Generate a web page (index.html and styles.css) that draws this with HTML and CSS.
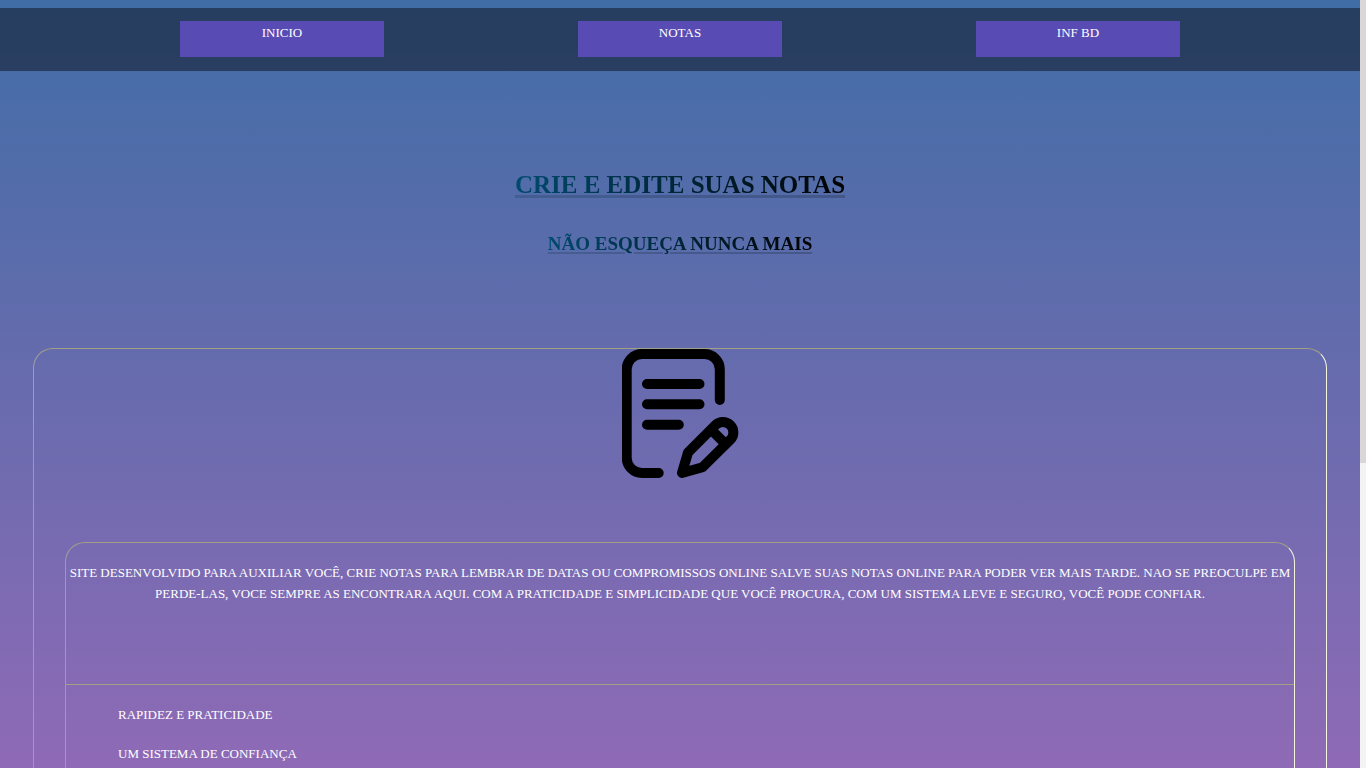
FILE: index.html
```html
<!DOCTYPE html>
<html lang="pt-BR">
<head>
<meta charset="utf-8">
<meta name="viewport" content="width=device-width, initial-scale=1">
<title>Notas</title>
<link rel="stylesheet" href="styles.css">
</head>
<body>
<div class="page">
  <nav class="menu">
    <a class="menu-link" href="#inicio">INICIO</a>
    <a class="menu-link" href="#notas">NOTAS</a>
    <a class="menu-link" href="#infbd">INF BD</a>
  </nav>
  <header class="hero">
    <h1 class="title">CRIE E EDITE SUAS NOTAS</h1>
    <h2 class="subtitle">NÃO ESQUEÇA NUNCA MAIS</h2>
  </header>
  <main class="card">
    <svg class="note-icon" viewBox="22 9 117 129" fill="none" stroke="#000" stroke-width="10" stroke-linecap="round" stroke-linejoin="round" role="img" aria-label="Nota">
      <path d="M58.700 133H42a15.300 15.300 0 0 1-15.300-15.300V29.300A15.300 15.300 0 0 1 42 14h62.500a15.300 15.300 0 0 1 15.300 15.300v30.700"/>
      <path d="M47 44h52.500M47 64.300h52.500M47 84.700h31.800"/>
      <path d="M82 133l6-20.500 27.500-27.500a10.400 10.400 0 0 1 14.800 14.800L102.500 127.300z"/>
      <path d="M113.500 92l11 11" stroke-linecap="butt"/>
    </svg>
    <section class="about">
      <p class="about-text">SITE DESENVOLVIDO PARA AUXILIAR VOCÊ, CRIE NOTAS PARA LEMBRAR DE DATAS OU COMPROMISSOS ONLINE SALVE SUAS NOTAS ONLINE PARA PODER VER MAIS TARDE. NAO SE PREOCULPE EM PERDE-LAS, VOCE SEMPRE AS ENCONTRARA AQUI. COM A PRATICIDADE E SIMPLICIDADE QUE VOCÊ PROCURA, COM UM SISTEMA LEVE E SEGURO, VOCÊ PODE CONFIAR.</p>
      <ul class="features">
        <li>RAPIDEZ E PRATICIDADE</li>
        <li>UM SISTEMA DE CONFIANÇA</li>
      </ul>
    </section>
  </main>
</div>
<div class="scroll-track" aria-hidden="true"><div class="scroll-thumb"></div></div>
</body>
</html>
```
FILE: styles.css
```css
* {
  box-sizing: border-box;
}

html,
body {
  height: 100%;
}

body {
  margin: 0;
  display: flex;
  overflow: hidden;
  font-family: "Liberation Serif", "Times New Roman", serif;
  font-size: 13px;
  color: #fff;
}

.page {
  flex: 1;
  display: flex;
  flex-direction: column;
  min-width: 0;
  padding-top: 8px;
  background: linear-gradient(#406da6, #8f6ab6);
}

.menu {
  display: flex;
  justify-content: space-around;
  padding: 13px 83px 14px;
  background: rgba(12, 15, 25, 0.5);
}

.menu-link {
  width: 17.1%;
  height: 36px;
  padding-top: 4px;
  background: #584cb4;
  color: #fff;
  text-align: center;
  text-decoration: none;
}

.hero {
  display: flex;
  flex-direction: column;
  align-items: center;
  gap: 32px;
  padding: 99px 0 93px;
}

.title,
.subtitle {
  margin: 0;
  background: linear-gradient(to right, #004b6e, #000);
  -webkit-background-clip: text;
  background-clip: text;
  color: transparent;
  text-decoration: underline rgba(0, 0, 0, 0.1);
  text-underline-offset: 2px;
}

.title {
  font-size: 25px;
  line-height: 30px;
  text-decoration-thickness: 3px;
}

.subtitle {
  font-size: 19px;
  line-height: 23px;
  text-decoration-thickness: 2px;
}

.card {
  flex: 1;
  display: flex;
  flex-direction: column;
  margin: 0 33px;
  border: 1px solid #a2a083;
  border-left-color: #a09ca4;
  border-right-color: #f5f5dc;
  border-bottom: 0;
  border-radius: 20px 20px 0 0;
}

.note-icon {
  display: block;
  width: 117px;
  height: 129px;
  margin: 0 auto 64px;
}

.about {
  flex: 1;
  margin: 0 31px;
  border: 1px solid #a2a083;
  border-left-color: #a09ca4;
  border-right-color: #f5f5dc;
  border-bottom: 0;
  border-radius: 20px 20px 0 0;
}

.about-text {
  margin: 0;
  padding: 19px 0 80px;
  border-bottom: 1px solid #a2a083;
  line-height: 21px;
  text-align: center;
}

.features {
  display: flex;
  flex-direction: column;
  gap: 24px;
  margin: 0;
  padding: 22px 52px 0;
  line-height: 15px;
  list-style: none;
}

.scroll-track {
  width: 6px;
  background: #f3f3f3;
}

.scroll-thumb {
  height: 60.3%;
  background: #d9d7d7;
}
```
